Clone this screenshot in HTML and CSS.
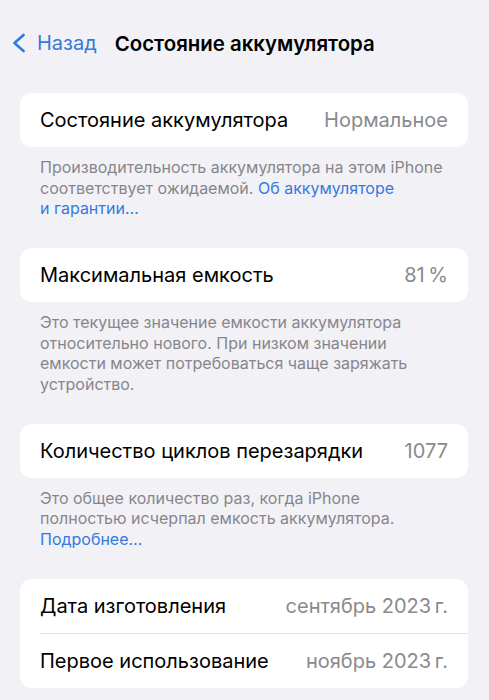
FILE: index.html
```html
<!DOCTYPE html>
<html lang="ru">
<head>
<meta charset="utf-8">
<title>Состояние аккумулятора</title>
<link rel="stylesheet" href="styles.css">
</head>
<body>
<nav class="nav">
  <a class="back" href="#">
    <svg class="chevron" width="14" height="20" viewBox="0 0 14 20" aria-hidden="true">
      <path d="M11.5 2 L2.5 10 L11.5 18" fill="none" stroke="currentColor" stroke-width="2.7" stroke-linecap="round" stroke-linejoin="round"/>
    </svg>
    <span>Назад</span>
  </a>
  <h1 class="title">Состояние аккумулятора</h1>
</nav>

<main class="content">
  <section class="group">
    <div class="card">
      <div class="row"><span class="label">Состояние аккумулятора</span><span class="value">Нормальное</span></div>
    </div>
    <p class="footer">
      <span class="line">Производительность аккумулятора на этом iPhone</span>
      <span class="line">соответствует ожидаемой. <a href="#" class="link">Об аккумуляторе</a></span>
      <span class="line"><a href="#" class="link">и гарантии…</a></span>
    </p>
  </section>

  <section class="group">
    <div class="card">
      <div class="row"><span class="label">Максимальная емкость</span><span class="value">81&#8239;%</span></div>
    </div>
    <p class="footer">Это текущее значение емкости аккумулятора относительно нового. При низком значении емкости может потребоваться чаще заряжать устройство.</p>
  </section>

  <section class="group">
    <div class="card">
      <div class="row"><span class="label">Количество циклов перезарядки</span><span class="value">1077</span></div>
    </div>
    <p class="footer">Это общее количество раз, когда iPhone полностью исчерпал емкость аккумулятора. <a href="#" class="link">Подробнее…</a></p>
  </section>

  <section class="group">
    <div class="card">
      <div class="row divided"><span class="label">Дата изготовления</span><span class="value">сентябрь 2023&#8239;г.</span></div>
      <div class="row"><span class="label">Первое использование</span><span class="value">ноябрь 2023&#8239;г.</span></div>
    </div>
  </section>
</main>
</body>
</html>
```

FILE: styles.css
```css
* { box-sizing: border-box; }

html, body {
  margin: 0;
  padding: 0;
}

body {
  background: #f2f1f6;
  font-family: Inter, "Noto Sans", "Liberation Sans", sans-serif;
  color: #000;
  width: 489px;
  height: 700px;
  overflow: hidden;
}

.nav {
  display: flex;
  align-items: center;
  height: 44px;
  margin-top: 21px;
  padding-left: 12px;
}

.back {
  display: flex;
  align-items: center;
  color: #3579e0;
  text-decoration: none;
  font-size: 20px;
}

.chevron {
  display: block;
  margin-right: 11px;
}

.title {
  margin: 0 0 0 18px;
  font-size: 20.4px;
  font-weight: 600;
}

.content {
  padding: 28px 21px 0 20px;
}

.card {
  background: #fff;
  border-radius: 12px;
  overflow: hidden;
}

.row {
  display: flex;
  justify-content: space-between;
  align-items: center;
  height: 54px;
  padding: 0 20px;
  font-size: 20px;
  position: relative;
}

.row.divided {
  height: 55px;
}

.row.divided::after {
  content: "";
  position: absolute;
  left: 20px;
  right: 0;
  bottom: 0;
  height: 1px;
  background: #e3e3e8;
}

.value {
  color: #8a8a8e;
}

.footer {
  margin: 0;
  padding: 10px 20px 29.5px;
  font-size: 16px;
  line-height: 20.5px;
  color: #86868b;
}

.line {
  display: block;
}

.link {
  color: #3579e0;
  text-decoration: none;
}
```
